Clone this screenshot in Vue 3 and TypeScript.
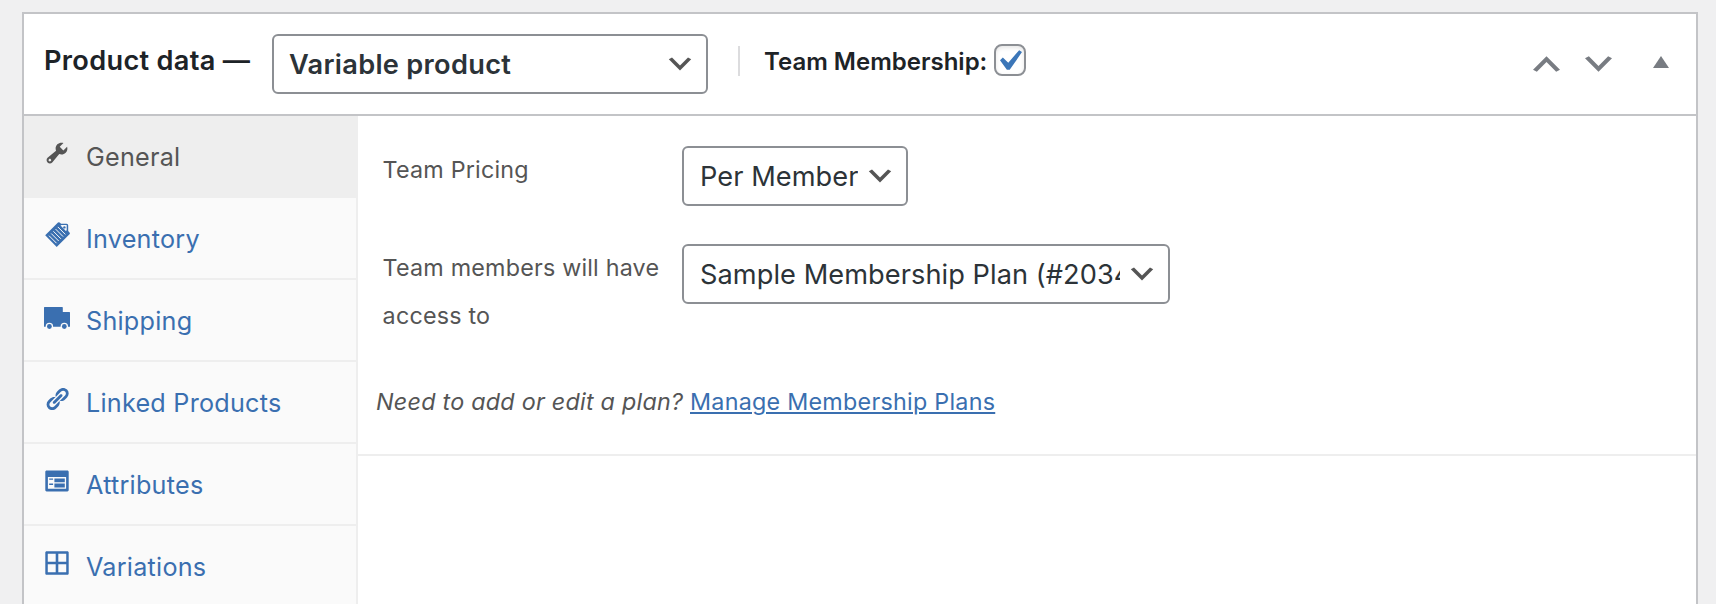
<script setup lang="ts">
import { ref } from 'vue'

type IconName = 'wrench' | 'tags' | 'truck' | 'link' | 'list' | 'grid'

interface Tab {
  label: string
  icon: IconName
}

const tabs: Tab[] = [
  { label: 'General', icon: 'wrench' },
  { label: 'Inventory', icon: 'tags' },
  { label: 'Shipping', icon: 'truck' },
  { label: 'Linked Products', icon: 'link' },
  { label: 'Attributes', icon: 'list' },
  { label: 'Variations', icon: 'grid' },
]

const activeTab = ref('General')
const productType = ref('variable')
const teamMembership = ref(true)
const pricing = ref('member')
const plan = ref('2034')
</script>

<template>
  <div class="page">
    <section class="postbox">
      <header class="head">
        <h2 class="title">Product data —</h2>
        <span class="select type">
          <select v-model="productType" aria-label="Product type">
            <option value="variable">Variable product</option>
          </select>
          <svg class="caret" viewBox="0 0 20 20"><path d="M5 6l5 5 5-5 2 1-7 7-7-7 2-1z" /></svg>
        </span>
        <label class="team">
          <span class="team-text">Team Membership:</span>
          <input v-model="teamMembership" class="native" type="checkbox" />
          <span class="box">
            <svg v-if="teamMembership" viewBox="5.78 4.89 10.39 9.32">
              <path d="M14.83 4.89l1.34.94-5.81 8.38H9.02L5.78 9.67l1.34-1.25 2.57 2.4z" />
            </svg>
          </span>
        </label>
        <div class="handles">
          <svg class="move" viewBox="3 6 14 8"><path d="M5 14l5-5 5 5 2-1-7-7-7 7 2 1z" /></svg>
          <svg class="move down" viewBox="3 6 14 8"><path d="M5 6l5 5 5-5 2 1-7 7-7-7 2-1z" /></svg>
          <svg class="toggle" viewBox="0 0 16 12"><path d="M8 0l8 12H0z" /></svg>
        </div>
      </header>

      <div class="body">
        <ul class="tabs">
          <li v-for="tab in tabs" :key="tab.label" :class="{ active: tab.label === activeTab }">
            <a href="#" @click.prevent="activeTab = tab.label">
              <svg v-if="tab.icon === 'wrench'" class="icon" viewBox="0 0 20 20">
                <path d="M16.68 9.77c-1.34 1.34-3.3 1.67-4.95.99l-5.41 6.52c-.99.99-2.59.99-3.58 0s-.99-2.59 0-3.57l6.52-5.42c-.68-1.65-.35-3.61.99-4.95 1.28-1.28 3.12-1.62 4.72-1.06l-2.89 2.89 2.82 2.82 2.86-2.87c.53 1.58.18 3.39-1.08 4.65zM3.81 16.21c.4.39 1.04.39 1.43 0 .4-.4.4-1.04 0-1.43-.39-.4-1.03-.4-1.43 0-.39.39-.39 1.03 0 1.43z" />
              </svg>
              <svg v-else-if="tab.icon === 'tags'" class="icon" viewBox="0 0 26 26">
                <path d="M1.2 13.3L14 .6q1-.8 2 .1l1 1h5.600q1.600 0 1.600 1.600V9l1.300 1.500q.8.900 0 1.700L12.700 25z" />
                <path class="cut" d="M17.600 3h5.100v5.200l-.8.800-5.400-5.400z" />
                <circle cx="20.400" cy="5.400" r="1.200" />
                <g class="rules">
                  <path d="M5 13.700l7.500 7.500M7.200 11.500l7.500 7.500M9.400 9.300l7.500 7.500M11.600 7.100l7.500 7.500M13.800 4.900l7.500 7.500" />
                </g>
              </svg>
              <svg v-else-if="tab.icon === 'truck'" class="icon" viewBox="0 0 26 26">
                <path d="M.6 3h17.600q.6 0 .6.600V8h6.600q.6 0 .6.600V22.700H0V3.600q0-.6.6-.6z" />
                <circle class="cut" cx="5.400" cy="22.500" r="3.700" />
                <circle class="cut" cx="20.300" cy="22.500" r="3.700" />
                <circle cx="5.400" cy="22.500" r="2.400" />
                <circle cx="20.300" cy="22.500" r="2.400" />
              </svg>
              <svg v-else-if="tab.icon === 'link'" class="icon" viewBox="0 0 20 20">
                <path d="M17.740 2.760c1.680 1.690 1.680 4.410 0 6.100l-1.530 1.520c-1.120 1.120-2.700 1.470-4.140 1.090l2.620-2.610.76-.77.76-.76c.84-.84.84-2.200 0-3.040-.84-.85-2.200-.85-3.040 0l-.77.76-3.380 3.380c-.37-1.440-.02-3.020 1.100-4.140l1.520-1.530c1.690-1.680 4.420-1.680 6.100 0zM8.590 13.430l5.340-5.340c.42-.42.42-1.100 0-1.520-.44-.43-1.130-.39-1.530 0l-5.330 5.340c-.42.42-.42 1.100 0 1.520.44.43 1.130.39 1.520 0zm-.76 2.290l4.140-4.150c.38 1.440.03 3.020-1.090 4.140l-1.520 1.530c-1.690 1.680-4.410 1.680-6.100 0-1.680-1.680-1.680-4.420 0-6.100l1.530-1.520c1.120-1.120 2.700-1.470 4.140-1.100l-4.140 4.150c-.85.84-.85 2.200 0 3.050.84.84 2.200.84 3.040 0z" />
              </svg>
              <svg v-else-if="tab.icon === 'list'" class="icon" viewBox="0 0 20 20">
                <path d="M2 2h16c.55 0 1 .45 1 1v14c0 .55-.45 1-1 1H2c-.55 0-1-.45-1-1V3c0-.55.45-1 1-1zm15 14V7H3v9h14zM4 8v1h3V8H4zm4 0v3h8V8H8zm-4 4v1h3v-1H4zm4 0v3h8v-3H8z" />
              </svg>
              <svg v-else class="icon" viewBox="0 0 20 20">
                <path fill-rule="evenodd" d="M2 1h16c.55 0 1 .45 1 1v16c0 .55-.45 1-1 1H2c-.55 0-1-.45-1-1V2c0-.55.45-1 1-1zm.9 1.900v6.200h6.100V2.900zm8.100 0v6.200h6.100V2.900zm-8.100 8v6.200h6.100v-6.200zm8.100 0v6.200h6.100v-6.200z" />
              </svg>
              <span>{{ tab.label }}</span>
            </a>
          </li>
        </ul>

        <div class="panel">
          <div class="options">
            <div class="field">
              <label for="pricing">Team Pricing</label>
              <span class="select pricing">
                <select id="pricing" v-model="pricing">
                  <option value="member">Per Member</option>
                </select>
                <svg class="caret" viewBox="0 0 20 20"><path d="M5 6l5 5 5-5 2 1-7 7-7-7 2-1z" /></svg>
              </span>
            </div>
            <div class="field access">
              <label for="plan">Team members will have access to</label>
              <span class="select plan">
                <select id="plan" v-model="plan">
                  <option value="2034">Sample Membership Plan (#2034)</option>
                </select>
                <svg class="caret" viewBox="0 0 20 20"><path d="M5 6l5 5 5-5 2 1-7 7-7-7 2-1z" /></svg>
              </span>
            </div>
            <p class="hint"><em>Need to add or edit a plan?</em> <a href="#" @click.prevent>Manage Membership Plans</a></p>
          </div>
        </div>
      </div>
    </section>
  </div>
</template>

<style>
body {
  background: #f0f0f1;
  overflow: hidden;
}
</style>

<style scoped>
.page {
  box-sizing: border-box;
  height: 604px;
  padding: 12px 18px 0 22px;
  overflow: hidden;
  background: #f0f0f1;
  font-family: Inter, "Liberation Sans", sans-serif;
  color: #555;
}

.postbox {
  box-sizing: border-box;
  height: 640px;
  border: 2px solid #c3c4c7;
  background: #fff;
}

.head {
  box-sizing: border-box;
  display: flex;
  align-items: flex-start;
  height: 102px;
  padding: 20px 27px 0 20px;
  border-bottom: 2px solid #c3c4c7;
}

.title {
  flex: none;
  width: 228px;
  margin: 0;
  font-size: 27.2px;
  font-weight: 600;
  line-height: 54px;
  letter-spacing: 0.3px;
  white-space: nowrap;
  color: #1d2327;
}

.select {
  position: relative;
  display: block;
  flex: none;
  height: 60px;
}

.select select {
  box-sizing: border-box;
  display: block;
  width: 100%;
  height: 60px;
  margin: 0;
  padding: 0 48px 0 16px;
  appearance: none;
  border: 2px solid #8c8f94;
  border-radius: 6px;
  background: #fff;
  font-family: inherit;
  font-size: 27.2px;
  letter-spacing: 0.06px;
  color: #2c3338;
}

.caret {
  position: absolute;
  top: 14px;
  right: 12px;
  width: 32px;
  height: 32px;
  fill: #555;
  pointer-events: none;
}

.type {
  width: 436px;
}

.type select {
  padding-left: 15px;
  font-weight: 600;
  letter-spacing: 0.3px;
}

.team {
  display: flex;
  align-items: center;
  height: 30px;
  margin: 12px 0 0 30px;
  padding-left: 24px;
  border-left: 2px solid #dcdcde;
}

.team-text {
  width: 230px;
  padding-top: 2px;
  font-size: 24px;
  font-weight: 600;
  line-height: 30px;
  white-space: nowrap;
  color: #1d2327;
}

.native {
  position: absolute;
  width: 0;
  height: 0;
  margin: 0;
  opacity: 0;
}

.box {
  box-sizing: border-box;
  display: flex;
  align-items: center;
  justify-content: center;
  width: 32px;
  height: 32px;
  margin-top: -2px;
  border: 2px solid #8c8f94;
  border-radius: 8px;
  background: #fff;
  box-shadow: inset 0 2px 4px rgba(0, 0, 0, 0.1);
}

.box svg {
  width: 22px;
  height: 20px;
  margin-left: 2px;
  fill: #3b76b8;
}

.handles {
  display: flex;
  align-items: center;
  height: 16px;
  margin: 22px 0 0 auto;
}

.handles svg {
  fill: #787c82;
}

.move {
  width: 27px;
  height: 16px;
}

.move.down {
  margin-left: 25px;
}

.toggle {
  width: 16px;
  height: 12px;
  margin: -4px 0 0 41px;
}

.body {
  display: flex;
  height: 534px;
}

.tabs {
  box-sizing: border-box;
  flex: none;
  width: 334px;
  margin: 0;
  padding: 0;
  border-right: 2px solid #eee;
  background: #fafafa;
  list-style: none;
}

.tabs li {
  --fill: #fafafa;
  box-sizing: border-box;
  height: 82px;
  border-bottom: 2px solid #eee;
  background: var(--fill);
}

.tabs li.active {
  --fill: #eee;
}

.tabs a {
  display: flex;
  align-items: center;
  height: 80px;
  padding-left: 20px;
  font-size: 25.2px;
  line-height: 40px;
  letter-spacing: 0.24px;
  text-decoration: none;
  color: #3a6fb0;
}

.tabs .active a {
  color: #555;
}

.tabs span {
  padding-top: 1px;
}

.icon {
  width: 26px;
  height: 26px;
  margin: 0 16px 7px 0;
  fill: currentColor;
}

.cut {
  fill: var(--fill);
}

.rules {
  fill: none;
  stroke: var(--fill);
  stroke-width: 1;
}

.panel {
  flex: 1;
  min-width: 0;
}

.options {
  box-sizing: border-box;
  height: 340px;
  padding: 30px 0 0 24px;
  border-bottom: 2px solid #eee;
}

.field {
  display: flex;
  align-items: flex-start;
  font-size: 23.3px;
  line-height: 48px;
  letter-spacing: 0.2px;
}

.field label {
  box-sizing: border-box;
  flex: none;
  width: 300px;
  padding: 0 12px 0 0.6px;
}

.pricing {
  width: 226px;
}

.access {
  margin-top: 38px;
}

.plan {
  width: 488px;
}

.hint {
  margin: 38px 0 0 -6px;
  font-size: 23.3px;
  line-height: 48px;
  letter-spacing: 0.26px;
  white-space: nowrap;
}

.hint a {
  color: #3a6fb0;
  text-decoration-thickness: 2px;
  text-underline-offset: 2px;
}
</style>
